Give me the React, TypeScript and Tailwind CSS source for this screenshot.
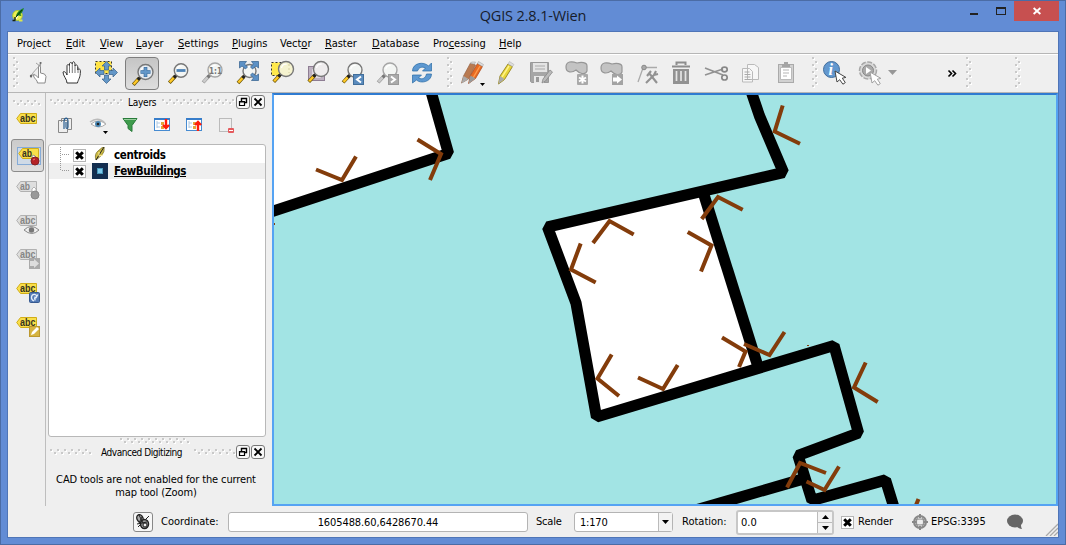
import type { ReactNode } from "react";

/* Every drawing uses window coordinates for its viewBox. */
function Art({ x, y, w, h, children, className = "" }: { x: number; y: number; w: number; h: number; children?: ReactNode; className?: string }) {
  return (
    <svg className={"block shrink-0 " + className} width={w} height={h} viewBox={`${x} ${y} ${w} ${h}`} fill="none">
      {children}
    </svg>
  );
}

function Dots({ count, vertical = false }: { count: number; vertical?: boolean }) {
  const dots = Array.from({ length: count }, (_, i) => ({ a: i * 3.5, b: i % 2 === 0 ? 0 : 3 }));
  const len = count * 3.5;
  return (
    <svg className="block shrink-0" width={vertical ? 6 : len} height={vertical ? len : 6}>
      {dots.map((d, i) => {
        const x = vertical ? d.b : Math.round(d.a);
        const y = vertical ? Math.round(d.a) : d.b;
        return (
          <g key={i}>
            <rect x={x + 1} y={y + 1} width="2" height="2" fill="#fff" />
            <rect x={x} y={y} width="2" height="2" fill="#c9c9c9" />
          </g>
        );
      })}
    </svg>
  );
}

function Lens({ cx, cy, gray = false, r = 6.7, fill = "#f3f5f3" }: { cx: number; cy: number; gray?: boolean; r?: number; fill?: string }) {
  const dx = cx - r * 0.7;
  const dy = cy + r * 0.7;
  return (
    <g>
      <path d={`M${dx - 7} ${dy + 7.5}L${dx - 1} ${dy + 1}`} stroke={gray ? "#999" : "#665000"} strokeWidth="3.6" />
      <path d={`M${dx - 6.6} ${dy + 7}L${dx - 1.6} ${dy + 1.6}`} stroke={gray ? "#ccc" : "#ffc928"} strokeWidth="2.4" />
      <path d={`M${dx - 2.5} ${dy + 2.5}L${dx + 0.3} ${dy - 0.3}`} stroke={gray ? "#777" : "#222"} strokeWidth="3" />
      <circle cx={cx} cy={cy} r={r} fill={fill} stroke={gray ? "#a5a5a5" : "#777"} strokeWidth="1.4" />
      <path d={`M${cx - r * 0.6} ${cy - 1}a${r * 0.65} ${r * 0.65} 0 0 1 ${r * 0.7} -${r * 0.5}`} stroke="#fff" strokeWidth="1.2" />
    </g>
  );
}

function Tag({ y, gray = false, short = false }: { y: number; gray?: boolean; short?: boolean }) {
  return (
    <g>
      <path
        d={`M16.7 ${y}L20.5 ${y - 5}H36.5V${y + 5}H20.5Z`}
        fill={gray ? "#dedede" : "#f9df4a"}
        stroke={gray ? "#b1b1b1" : "#d1ad18"}
      />
      <text x="20" y={y + 3.5} fontSize="10.5" fontWeight="700" fontFamily="'Liberation Sans','Noto Sans',sans-serif" fill={gray ? "#858585" : "#36331f"} textLength={short ? 10 : 15.5} lengthAdjust="spacingAndGlyphs">
        {short ? "ab" : "abc"}
      </text>
    </g>
  );
}

function Cursor({ x, y, gray = false }: { x: number; y: number; gray?: boolean }) {
  return (
    <path
      d={`M${x} ${y}l2 11 2.7-2.3 3.2 4.5 2.4-1.6-3-4.4 3.6-.8z`}
      fill="#fff"
      stroke={gray ? "#a0a0a0" : "#444"}
      strokeWidth="1"
    />
  );
}

function DockButton({ kind }: { kind: "float" | "close" }) {
  return (
    <span className="flex size-[14px] shrink-0 items-center justify-center rounded-[3px] border border-[#777] bg-[#f8f8f8]">
      <svg width="10" height="10" viewBox="0 0 10 10" fill="none" stroke="#000">
        {kind === "float" ? (
          <g>
            <path d="M3.5 4V1.5h5v4H6.5M3 1.5h6" strokeWidth="1.4" />
            <path d="M1.5 4.5h5v4h-5zM1 5h6" strokeWidth="1.2" />
          </g>
        ) : (
          <path d="M1.5 1.5l7 7m0-7l-7 7" strokeWidth="1.8" />
        )}
      </svg>
    </span>
  );
}

function Check({ className = "" }: { className?: string }) {
  return (
    <span className={"flex size-[13px] shrink-0 items-center justify-center border border-[#b5b5b5] bg-white " + className}>
      <svg width="9" height="9" viewBox="0 0 9 9">
        <path d="M1.2 1.2l6.6 6.6m0-6.6l-6.6 6.6" stroke="#000" strokeWidth="3" />
      </svg>
    </span>
  );
}

const menu: [string, string, string][] = [
  ["Pro", "j", "ect"], ["", "E", "dit"], ["", "V", "iew"], ["", "L", "ayer"], ["", "S", "ettings"], ["", "P", "lugins"],
  ["Vect", "o", "r"], ["", "R", "aster"], ["", "D", "atabase"], ["Pro", "c", "essing"], ["", "H", "elp"],
];
const menuWidths = [49, 34, 36, 42, 54, 48, 45, 47, 61, 66, 30];

function TitleBar() {
  return (
    <header className="flex h-[30px] items-start">
      <Art x={7} y={1} w={24} h={29}>
        <ellipse cx="17.500" cy="15.500" rx="4.800" ry="5" fill="#f0ef53" stroke="#a8c72e" />
        <path d="M16 19l5-8" stroke="#fff" strokeWidth="1" />
        <path d="M16 17c0-4 3-7 8-9-1 3-2 5-3.500 6l1 2-3-.5z" fill="#18851f" />
        <path d="M16 17l6-7" stroke="#092f10" />
        <path d="M12.500 20.500h3M15 17v3" stroke="#172013" strokeWidth="1.400" />
        <path d="M19 20.500h3.500" stroke="#dde84c" strokeWidth="2" />
      </Art>
      <h1 className="h-[30px] flex-1 pl-[13px] text-center font-['Open_Sans','Noto_Sans',sans-serif] text-[14.5px] leading-[29px] tracking-[-0.15px] text-[#171c2b]"><span className="relative left-[30px]">QGIS 2.8.1-Wien</span></h1>
      <Art x={962} y={1} w={52} h={20}>
        <rect x="970" y="13" width="8" height="2" fill="#222" />
        <rect x="996.500" y="8.500" width="9" height="6" stroke="#222" />
        <path d="M996 8h10" stroke="#222" strokeWidth="2" />
      </Art>
      <div className="flex h-5 w-[45px] items-center justify-center bg-[#c75050]">
        <svg width="8" height="8" viewBox="0 0 8 8"><path d="M.6 1l6.800 6m0-6L.6 7" stroke="#fff" strokeWidth="1.900" /></svg>
      </div>
    </header>
  );
}

function Toolbar() {
  return (
    <div className="flex h-[38px] shrink-0 items-center border-t border-white pb-px">
      <div className="flex w-3 justify-center pl-1"><Dots count={9} vertical /></div>
      <Art x={20} y={55} w={105} h={36}>
        <path d="M37.500 83c0-3-3-4-4-7-1-2 1-2 2-1l3 3V66.500c0-2 2-2 2 0V73l4 1 1.500 2.500-1 6.500z" fill="#fff" stroke="#8b8b8b" />
        <path d="M31 75h4M31 78c0-5 7-10 10-14M40 66l-4-3M41 62l-1 5" stroke="#999" strokeWidth=".9" />
        <circle cx="31" cy="76" r="1.200" fill="#666" /><circle cx="40.500" cy="63" r="1" fill="#666" />
        <path d="M67 83c0-4-4-7-4-11 1-1 3 0 4 3v-9c0-2 2-2 2.500 0V64c0-2 2.500-2 2.700 0 0-3 2.600-3 2.800 0v2c1-2 2.700-1 2.700 1v3c1-2 2.700-1 2.700 1 0 7-2 8-3 12z" fill="#fff" stroke="#333" />
        <path d="M69.500 65v8m2.800-9v9m2.700-8v8m3-6v6" stroke="#555" strokeWidth=".8" />
        <rect x="95.500" y="61.500" width="16" height="12" fill="#ffe343" stroke="#333" strokeDasharray="2 2" />
        <g fill="#6397c8" stroke="#365f87" strokeWidth=".7">
          <path d="M106.500 61.500l4.500 4.500h-2.500v4h-4v-4H102zM106.500 83.500l4.500-4.500h-2.500v-4h-4v4H102zM95.500 72.500l4.500-4.500v2.500h4v4h-4V77zM117.500 72.500l-4.500-4.500v2.500h-4v4h4V77z" />
        </g>
      </Art>
      <div className="flex h-[33px] w-[34px] items-center justify-center rounded-[4px] border border-[#7e7e7e] bg-linear-to-b from-[#c5c5c5] to-[#dedede]">
        <Art x={126} y={57} w={32} h={30}>
          <Lens cx={145.500} cy={71} r={7.500} fill="#e4eaf0" />
          <path d="M145.500 66v10M140.500 71h10" stroke="#356899" strokeWidth="3.600" />
          <path d="M145.500 66.500v9M141 71h9" stroke="#6397c8" strokeWidth="2.400" />
        </Art>
      </div>
      <Art x={159} y={55} w={281} h={36}>
        <Lens cx={181} cy={70.500} />
        <path d="M176.500 70.500h9" stroke="#4d83b7" strokeWidth="2.800" />
        <Lens cx={215} cy={70} r={7} gray />
        <text x="209" y="73.500" fontSize="9" fontWeight="700" fill="#777" fontFamily="'DejaVu Sans',sans-serif" textLength="13" lengthAdjust="spacingAndGlyphs">1:1</text>
        <Lens cx={249.500} cy={71} r={6.500} />
        <g fill="#5d91c5" stroke="#315f8c" strokeWidth=".7">
          <path d="M239.500 61.500h7l-2 2.500 3 3-2 2-3.500-3-2.500 2zM258.500 61.500h-7l2 2.500-3 3 2 2 3.500-3 2.500 2zM258.500 80.500h-7l2-2.500-3-3 2-2 3.500 3 2.500-2z" />
        </g>
        <rect x="271.500" y="62.500" width="17" height="13" fill="#ffe94c" stroke="#333" strokeDasharray="2 2" />
        <Lens cx={286} cy={69} r={7.500} fill="#f5f3cf" />
        <path d="M289 64v9" stroke="#d5d0a0" strokeDasharray="2 2" />
        <rect x="308.500" y="66.500" width="16" height="14" fill="#bdb1c0" stroke="#8e7d93" />
        <rect x="312" y="69" width="9" height="9" fill="#e0d8e2" />
        <Lens cx={321} cy={69} r={7.500} fill="#eeeced" />
        <Lens cx={355} cy={70} r={7} />
        <rect x="353.500" y="74.500" width="10" height="10" fill="#5a8bbd" stroke="#416e9a" />
        <path d="M361 76.500l-4 3 4 3" stroke="#fff" strokeWidth="2" />
        <Lens cx={390} cy={70} r={7} gray />
        <rect x="388.500" y="74.500" width="10" height="10" fill="#aaa" stroke="#999" />
        <path d="M391 76.500l4 3-4 3" stroke="#fff" strokeWidth="2" />
        <path d="M412.500 71c0-8 11-10 16-5l3-3v8h-9l3-3c-4-2-7 0-8 3z" fill="#5d98d1" stroke="#286ba5" strokeWidth=".7" />
        <path d="M431.500 74c0 8-11 10-15 6l-4 3v-8h9l-3 3c4 2 7 0 8-4z" fill="#5d98d1" stroke="#286ba5" strokeWidth=".7" />
      </Art>
      <div className="flex w-[15px] justify-center pl-1"><Dots count={9} vertical /></div>
      <Art x={455} y={55} w={349} h={36}>
        <path d="M461.500 83l2-7 7-13 5 2-7 14z" fill="#b97a51" stroke="#936144" strokeWidth=".7" />
        <path d="M461.500 83.500l2-7.500 5 3z" fill="#aaa" />
        <path d="M468.500 83.500l2-8 7-12 5 3-7 12z" fill="#e86a22" stroke="#a34214" strokeWidth=".7" />
        <path d="M473 78l7-12" stroke="#ff9b4b" strokeWidth="1.400" />
        <path d="M468.500 84l2-8.500 5 3z" fill="#999" /><path d="M470.500 63.500l1-1.500h4l-1 2zM477.500 63.500l1-2 5 3-1 2z" fill="#ddd" stroke="#999" strokeWidth=".5" />
        <path d="M480 83h5l-2.500 3z" fill="#000" />
        <path d="M498.500 84l1.500-8 8-12 4.500 2.500-8 13z" fill="#e8d638" stroke="#9c8b27" />
        <path d="M502 77l7-11" stroke="#fff28a" strokeWidth="1.400" />
        <path d="M498.500 84l1.500-8 4.500 3z" fill="#aaa" /><path d="M508 64l1.500-2.500 4.500 3-1.500 2z" fill="#ddd" stroke="#aaa" strokeWidth=".5" />
        <path d="M530.500 62.500h18v20h-17l-1-1z" fill="#a6a6a6" stroke="#999" />
        <path d="M533 63h14v9h-14z" fill="#e4e4e4" /><path d="M535 66h10m-10 3h10" stroke="#aaa" />
        <path d="M534 76h10v7h-10z" fill="#e8e8e8" /><path d="M536 77h3v5h-3z" fill="#999" />
        <path d="M542 83l1-4 7-9 2.500 2-7 9z" fill="#bbb" stroke="#888" strokeWidth=".8" />
        <g fill="#c3c3c3" stroke="#969696" strokeWidth="1.200">
          <path d="M566 67c0-6 6-6 11-4 4-1 10-1 10 3v5c-2 5-8 2-11-1-4 3-10 3-10-3z" />
          <path d="M601 68c0-6 6-6 11-4 4-1 10-1 10 3v5c-2 5-8 2-11-1-4 3-10 3-10-3z" />
        </g>
        <rect x="577" y="74" width="11" height="11" rx="1" fill="#a9a9a9" /><path d="M582.500 75.500v8M579 77.500l7 4m0-4l-7 4" stroke="#fff" strokeWidth="2" />
        <rect x="612" y="74" width="11" height="11" fill="#a3a3a3" /><path d="M613 77.500h4v-2l5 4-5 4v-2h-4z" fill="#fff" />
        <path d="M638 82l5-14M646 67.500h11" stroke="#aaa" strokeWidth="1.300" /><circle cx="644" cy="67.500" r="2.300" fill="#aaa" stroke="#888" />
        <path d="M646 83l9-9m-6-1l8 10M651 71l-4 5m9-5l-2 4 4-1" stroke="#929292" strokeWidth="2.100" />
        <path d="M676.500 65v-2.500h9V65M672 66.500h18" stroke="#8d8d8d" strokeWidth="2" />
        <path d="M673 69h16v15h-16z" fill="#929292" /><path d="M676.500 71v10m4.500-10v10m4.500-10v10" stroke="#e5e5e5" strokeWidth="1.700" />
        <path d="M705 68l18 7M705 75l18-6" stroke="#929292" strokeWidth="1.700" />
        <ellipse cx="724.500" cy="69.500" rx="2.700" ry="2.300" stroke="#888" strokeWidth="1.700" /><ellipse cx="724.500" cy="77.500" rx="2.700" ry="2.500" stroke="#888" strokeWidth="1.700" />
        <path d="M747.500 64.500h7l4 3v12h-11zM742.500 68.500h7l3 3v10.500h-10z" fill="#f7f7f7" stroke="#bababa" />
        <path d="M744.500 72h5m-5 2.500h6m-6 2.500h6m-6 2.500h6" stroke="#aaa" />
        <rect x="778.500" y="64.500" width="15" height="18" fill="#d1d1d1" stroke="#aaa" /><path d="M780.500 67.500h11v12h-11z" fill="#fff" stroke="#bbb" />
        <path d="M782 64h8v3h-8zM784 62h4v3h-4z" fill="#a5a5a5" /><path d="M783 70h6m-6 3h6m-6 3h4" stroke="#b5b5b5" />
      </Art>
      <div className="flex w-[17px] justify-center pl-1"><Dots count={9} vertical /></div>
      <Art x={821} y={55} w={112} h={36}>
        <circle cx="831.500" cy="69.500" r="8" fill="#6298cf" stroke="#416e9d" />
        <text x="828.500" y="75" fill="#fff" fontFamily="'Liberation Serif',serif" fontSize="16" fontWeight="700" fontStyle="italic">i</text>
        <Cursor x={835} y={71} />
        <circle cx="868" cy="70.500" r="8.500" fill="#d9d9d9" stroke="#a8a8a8" strokeWidth="1.500" strokeDasharray="5 1.500" />
        <circle cx="868" cy="70.500" r="5.500" fill="#aaa" stroke="#888" /><path d="M866 67l5 3.500-5 3.500z" fill="#fff" />
        <Cursor x={870} y={72} gray />
        <path d="M888 70h9l-4.500 5z" fill="#979797" />
      </Art>
      <Art x={933} y={55} w={30} h={36}>
        <path d="M948.500 70.500l3 3-3 3m4-6l3 3-3 3" stroke="#000" strokeWidth="1.600" />
      </Art>
      <div className="w-[49px] pl-[3px]"><Dots count={9} vertical /></div>
      <div className="pl-[3px]"><Dots count={9} vertical /></div>
    </div>
  );
}

function LabelBar() {
  return (
    <aside className="flex w-[38px] shrink-0 flex-col border-r border-[#bebebe] pt-[7px]">
      <div className="h-[9px] pl-[5px]"><Dots count={8} /></div>
      <Art x={8} y={109} w={36} h={30}><Tag y={118.500} /></Art>
      <div className="ml-[3px] flex size-[33px] shrink-0 items-center justify-center rounded-[3px] border border-[#8b8b8b] bg-linear-to-b from-[#cbcbcb] to-[#dedede]">
        <Art x={12} y={140} w={31} h={31}>
          <rect x="17.500" y="147.500" width="23" height="17" fill="#cfdae6" stroke="#85abd7" />
          <g transform="translate(2 0)"><Tag y={153.500} short /></g>
          <path d="M32 161v-5l2-1 2 2v4" fill="#fff" stroke="#777" strokeWidth=".7" />
          <circle cx="35" cy="161" r="4" fill="#b52125" stroke="#812023" /><path d="M33 160l2-1" stroke="#e77" />
        </Art>
      </div>
      <Art x={8} y={172} w={36} h={180}>
        <Tag y={186.500} gray short />
        <path d="M32 195v-6l2-2 2 2v5" fill="#fff" stroke="#999" strokeWidth=".7" /><circle cx="35" cy="195" r="4" fill="#999" stroke="#888" />
        <Tag y={220.500} gray />
        <path d="M24 230q7-7 15 0q-7 7-15 0z" fill="#eee" stroke="#888" /><circle cx="31.500" cy="230" r="2.700" fill="#777" />
        <Tag y={254.500} gray />
        <rect x="29" y="258" width="11" height="11" fill="#aaa" /><path d="M30 261h4v-2l5 4.500-5 4.500v-2h-4z" fill="#ddd" />
        <Tag y={288.500} />
        <rect x="29.500" y="292.500" width="10" height="10" rx="1" fill="#5279b4" stroke="#365990" /><path d="M34 301c-4-2-3-7 1-6.500 3 1 2 4-1 4m1-2v4m1-3l2-3" stroke="#e4edfa" strokeWidth="1.300" />
        <Tag y={322.500} />
        <rect x="29.500" y="326.500" width="10" height="10" fill="#d6b441" stroke="#bc982f" /><path d="M31 335l1-3 5-5 2 2-5 5z" fill="#fff" />
      </Art>
    </aside>
  );
}

function LayersDock() {
  return (
    <section className="flex w-[226px] shrink-0 flex-col">
      <div className="flex h-[17px] shrink-0 items-center pl-1 pt-px">
        <div className="w-[78px] overflow-hidden"><div className="w-[73px] overflow-hidden"><Dots count={21} /></div></div>
        <span className="w-[34px] text-[10px] tracking-[-0.25px]">Layers</span>
        <div className="w-[74px] overflow-hidden"><Dots count={21} /></div>
        <div className="flex gap-px"><DockButton kind="float" /><DockButton kind="close" /></div>
      </div>
      <Art x={46} y={110} w={226} h={34}>
        <path d="M58.500 120.500h9v12h-9z" fill="#eee" stroke="#888" /><path d="M61.500 122v-3.500h10v11h-4" stroke="#888" />
        <path d="M64 129v-7c0-5 4-5 4-1v6c0 2-2 2-2 0v-5" stroke="#2a5f91" strokeWidth="1.200" />
        <path d="M91 124q7-6 15 0q-7 6-15 0z" fill="#fff" stroke="#aaa" /><circle cx="98" cy="124" r="3" fill="#4b88b5" /><circle cx="98" cy="124" r="1.300" fill="#222" />
        <path d="M90 122q8-6 15 1" stroke="#bbb" strokeWidth="1.500" />
        <path d="M103 131h5l-2.500 3z" fill="#000" />
        <path d="M123 118.500h14l-5 7v6l-4-3v-3z" fill="#3e9b4c" stroke="#287b3a" /><path d="M124 119.500h12" stroke="#99ce9e" />
        {[154, 186].map((x) => (
          <g key={x}>
            <rect x={x + 0.5} y="118.500" width="15" height="12" fill="#fff" stroke="#468bd1" /><path d={`M${x} 119h16`} stroke="#377dca" strokeWidth="2" />
            <path d={`M${x + 3} 121v7m0-5h3m-3 4h3`} stroke="#adc8e2" />
            <path d={`M${x + 7} 122h3v3h-3zm0 4h3v3h-3z`} fill="#e5a53a" />
          </g>
        ))}
        <path d="M166 119v9m-3-3l3 3 3-3M198 131v-9m-3 3l3-3 3 3" stroke="#ff1c0b" strokeWidth="2.400" />
        <rect x="219.500" y="118.500" width="12" height="13" stroke="#bbb" /><rect x="228" y="128" width="6" height="5" rx="1" fill="#e45a5d" /><path d="M229 130.500h4" stroke="#fff" />
      </Art>
      <div className="ml-[2px] h-[293px] w-[218px] shrink-0 rounded-[3px] border border-[#b8b8b8] bg-white pt-[2px]">
        <div className="flex h-4 items-center">
          <Art x={49} y={147} w={24} h={16}><path d="M60.500 147v16M62 154.500h8" stroke="#999" strokeDasharray="1 1" /></Art>
          <Check />
          <Art x={86} y={147} w={28} h={16}><path d="M96 160q-2-6 2-9l6-5q1 6-2 9z" fill="#cdbb43" stroke="#71671f" strokeWidth=".7" /><path d="M96 160l8-13" stroke="#222" /><path d="M99 152v4l4-1" stroke="#fff0a0" /></Art>
          <span className="text-[11.5px] font-bold leading-4 tracking-[-0.35px]">centroids</span>
        </div>
        <div className="flex h-4 items-center bg-[#efefef]">
          <Art x={49} y={163} w={24} h={16}><path d="M60.500 163v8M62 170.500h8" stroke="#999" strokeDasharray="1 1" /></Art>
          <Check />
          <Art x={86} y={163} w={28} h={16}><rect x="92" y="163" width="16" height="16" fill="#132e50" /><rect x="97.500" y="168.500" width="5" height="5" fill="#7ecbed" stroke="#4797bb" /></Art>
          <span className="text-[11.5px] font-bold leading-4 tracking-[-0.45px] underline">FewBuildings</span>
        </div>
      </div>
      <div className="flex h-[7px] shrink-0 items-center pl-[74px]"><Dots count={20} /></div>
      <div className="flex h-[16px] shrink-0 items-center pl-1">
        <div className="w-[51px]"><div className="w-[42px] overflow-hidden"><Dots count={13} /></div></div>
        <span className="w-[93px] whitespace-nowrap text-[10px] tracking-[-0.45px]">Advanced Digitizing</span>
        <div className="w-[42px] overflow-hidden"><Dots count={12} /></div>
        <div className="flex gap-px"><DockButton kind="float" /><DockButton kind="close" /></div>
      </div>
      <p className="ml-[2px] w-[216px] whitespace-nowrap pt-[13px] text-center text-[11px] leading-[13px] tracking-[-0.12px]">CAD tools are not enabled for the current<br />map tool (Zoom)</p>
    </section>
  );
}

const arrows = [
  "316,169.500 342,180 356,156.500", "417.500,139.500 441,154 430,180", "782.700,105.500 774.700,131.500 800,143.700",
  "701.700,219 718,197 742.700,209.700", "593,243 609.500,221 633.700,234.500", "580.700,243.500 571,269.500 595.700,282.500",
  "687.700,232 711.500,245.500 701,271.500", "611.700,354.500 597.500,378.500 619,396", "638,377.500 663,389 677.700,365",
  "722,337.500 745.500,351.500 739,367", "744,344 769.500,355 784.500,332", "865.700,362.500 854,387.500 877.700,402",
  "787,487.500 800,463 826,473", "806.500,481.500 824.500,490 839,466.500", "918.500,499 914,510",
];

function MapCanvas() {
  return (
    <main className="h-[413px] w-[786px] border-2 border-[#55a3f3] border-t-[#2f7bd1]">
      <Art x={274} y={95} w={782} h={409}>
        <rect x="274" y="95" width="782" height="409" fill="#a2e4e4" />
        <path d="M274 95H432L447 153.500L274 211Z" fill="#fff" />
        <path d="M547.500 227L704 193L757 367L596 417L576 303Z" fill="#fff" />
        <g stroke="#000" strokeWidth="11.200" strokeLinejoin="bevel">
          <path d="M430 88L448.500 153.500L266 213.500" />
          <path d="M750 88L759.500 116L783.500 172.500L547.500 227L576 303L596.500 417L834 345.500L858.500 433L798 455.500L812 500.500L885.500 480L896 514" />
          <path d="M704 195L757.500 365" />
          <path d="M680 514.600L803 479" />
        </g>
        <g stroke="#833c0b" strokeWidth="4">
          {arrows.map((p) => <polyline key={p} points={p} />)}
        </g>
        <rect x="274" y="223" width="1" height="2" fill="#833c0b" />
        <rect x="807" y="345" width="2" height="1" fill="#833c0b" />
      </Art>
    </main>
  );
}

function StatusBar() {
  return (
    <footer className="flex h-[30px] shrink-0 items-center pt-[2px] text-[11px]">
      <div className="ml-[125px] flex size-[20px] items-center justify-center rounded-[3px] border border-[#888] bg-[#f7f7f7]">
        <svg width="16" height="16" viewBox="0 0 16 16" fill="none" stroke="#222">
          <ellipse cx="5" cy="4.500" rx="3" ry="4" fill="#aaa" strokeWidth="1.400" transform="rotate(-25 5 4.500)" />
          <ellipse cx="9.500" cy="10" rx="4" ry="4.500" fill="#999" strokeWidth="1.500" />
          <path d="M4 1l5 10M7 3l-3 6M2 10l10-2M11 5l3-3M3 13l3-3" /><circle cx="10" cy="11" r="2" fill="#eee" />
        </svg>
      </div>
      <span className="ml-[8px] w-[67px]">Coordinate:</span>
      <div className="h-[20px] w-[300px] rounded-[3px] border border-[#b4b4b4] bg-white text-center leading-[20px] tracking-[-0.1px]">1605488.60,6428670.44</div>
      <span className="ml-2 w-[38px] tracking-[-0.2px]">Scale</span>
      <div className="flex h-[20px] w-[99px] rounded-[3px] border border-[#b4b4b4] bg-white leading-[20px]">
        <span className="w-[83px] pl-[5px] tracking-[-0.2px]">1:170</span>
        <span className="flex flex-1 items-center justify-center border-l border-[#bbb] bg-[#f3f3f3]"><svg width="7" height="4"><path d="M0 0h7L3.500 4z" /></svg></span>
      </div>
      <span className="ml-[9px] w-[54px]">Rotation:</span>
      <div className="flex h-[25px] w-[98px] rounded-[3px] border-2 border-[#c7c7c7] bg-white leading-[22px]">
        <span className="w-[79px] pl-[3px]">0.0</span>
        <span className="flex flex-1 flex-col border-l border-[#bbb] bg-[#f3f3f3]">
          <span className="flex flex-1 items-center justify-center border-b border-[#bbb]"><svg width="7" height="4"><path d="M0 4h7L3.500 0z" /></svg></span>
          <span className="flex flex-1 items-center justify-center"><svg width="7" height="4"><path d="M0 0h7L3.500 4z" /></svg></span>
        </span>
      </div>
      <Check className="ml-[7px]" />
      <span className="ml-[4px] w-[54px]">Render</span>
      <svg className="shrink-0" width="16" height="16" viewBox="0 0 16 16" fill="none" stroke="#888"><circle cx="8" cy="8" r="6" fill="#eee" strokeWidth="2" /><ellipse cx="8" cy="8" rx="3.500" ry="6" /><ellipse cx="8" cy="8" rx="6" ry="3" /><path d="M8 0v4m0 8v4M0 8h4m8 0h4" strokeWidth="2" /></svg>
      <span className="ml-[3px] w-[75px]">EPSG:3395</span>
      <svg className="shrink-0" width="18" height="16" viewBox="0 0 18 16"><ellipse cx="9" cy="7" rx="8" ry="6.500" fill="#666" /><path d="M10 12c2 2 4 3 6 3-1-2-1-3-1-5z" fill="#666" /></svg>
      <svg className="ml-auto self-end" width="13" height="13" viewBox="0 0 13 13"><path d="M1 13L13 1M5 13l8-8M9 13l4-4" stroke="#aaa" strokeWidth="1.300" /></svg>
    </footer>
  );
}

export default function App() {
  return (
    <div className="h-[545px] w-[1066px] overflow-hidden border border-[#4b6ca5] bg-[#628cd5] px-[6px] font-['DejaVu_Sans_Condensed','Noto_Sans',sans-serif] text-black">
      <TitleBar />
      <div className="flex h-[507px] w-[1052px] flex-col border border-[#4f75b7] bg-[#efefef]">
        <nav className="flex h-[22px] shrink-0 items-center border-b border-[#b6b6b6] pl-[9px] pt-[2px] text-[11px]">
          {menu.map(([before, key, after], i) => (
            <span key={i} className="whitespace-nowrap leading-[19px]" style={{ width: menuWidths[i] }}>
              {before}<u>{key}</u>{after}
            </span>
          ))}
        </nav>
        <Toolbar />
        <div className="flex h-[414px] shrink-0 border-t border-[#b6b6b6]">
          <LabelBar />
          <LayersDock />
          <MapCanvas />
        </div>
        <StatusBar />
      </div>
    </div>
  );
}
